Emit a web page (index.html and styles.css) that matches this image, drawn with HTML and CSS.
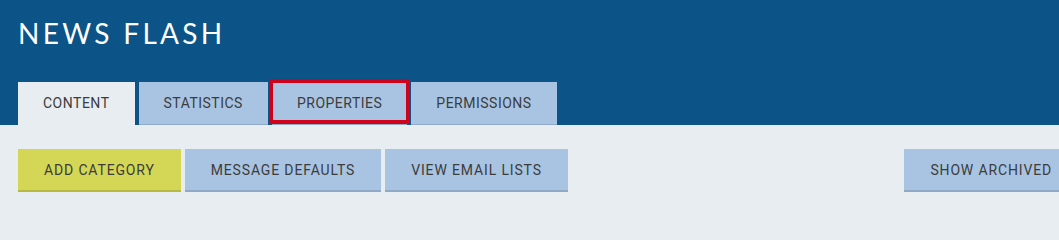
FILE: index.html
```html
<!DOCTYPE html>
<html>
<head>
<meta charset="utf-8">
<link rel="stylesheet" href="styles.css">
</head>
<body>
<div class="page">
  <header class="header">
    <h1 class="title">NEWS FLASH</h1>
    <nav class="tabs">
      <a class="tab tab-active">CONTENT</a>
      <a class="tab">STATISTICS</a>
      <a class="tab tab-highlight">PROPERTIES</a>
      <a class="tab">PERMISSIONS</a>
    </nav>
  </header>
  <main class="content">
    <div class="toolbar">
      <button class="btn btn-yellow">ADD CATEGORY</button>
      <button class="btn">MESSAGE DEFAULTS</button>
      <button class="btn">VIEW EMAIL LISTS</button>
      <button class="btn btn-right">SHOW ARCHIVED</button>
    </div>
  </main>
</div>
</body>
</html>
```

FILE: styles.css
```css
html, body {
  margin: 0;
  padding: 0;
  overflow: hidden;
  background: #e8edf1;
}
.page {
  width: 1096px;
  font-family: Roboto, "Liberation Sans", sans-serif;
}
.header {
  background: #0c5487;
  padding: 0 18px;
  height: 125px;
  box-sizing: border-box;
  display: flex;
  flex-direction: column;
}
.title {
  margin: 0;
  padding-top: 16px;
  font-family: Lato, "Open Sans", sans-serif;
  font-weight: 400;
  font-size: 28px;
  letter-spacing: 3.3px;
  color: #ffffff;
  line-height: 34px;
}
.tabs {
  display: flex;
  gap: 4px;
  height: 43px;
  margin-top: auto;
}
.tab {
  display: flex;
  align-items: center;
  padding: 0 25px;
  background: #a8c4e2;
  border-bottom: 1px solid #8fa9c6;
  color: #3c3c3c;
  font-size: 14px;
  letter-spacing: 0.5px;
  box-sizing: border-box;
  position: relative;
}
.tab-active {
  background: #e8edf1;
  border-bottom-color: #e8edf1;
}
.tab-highlight::after {
  content: "";
  position: absolute;
  left: -3px;
  right: -3px;
  top: -3px;
  bottom: 0;
  border: 4px solid #d0021b;
  pointer-events: none;
}
.content {
  padding: 24px 18px 40px;
}
.toolbar {
  display: flex;
  gap: 4px;
}
.btn {
  height: 43px;
  padding: 0 26px;
  border: 0;
  border-bottom: 2px solid #8fa9c6;
  background: #a8c4e2;
  color: #3c3c3c;
  font-family: Roboto, "Liberation Sans", sans-serif;
  font-size: 14px;
  letter-spacing: 0.85px;
  box-sizing: border-box;
}
.btn-yellow {
  background: #d4d655;
  border-bottom-color: #b8b942;
}
.btn-right {
  margin-left: auto;
}
```
